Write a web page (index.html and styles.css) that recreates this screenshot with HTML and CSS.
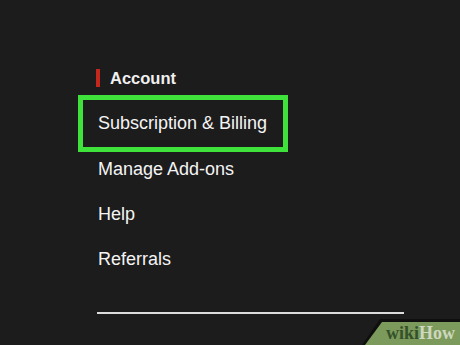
FILE: index.html
```html
<!DOCTYPE html>
<html>
<head>
<meta charset="utf-8">
<link rel="stylesheet" href="styles.css">
</head>
<body>
<div class="page">
  <div class="menu">
    <div class="heading"><span class="bar"></span><span class="heading-text">Account</span></div>
    <div class="selected">Subscription &amp; Billing</div>
    <ul class="items">
      <li>Manage Add-ons</li>
      <li>Help</li>
      <li>Referrals</li>
    </ul>
    <div class="rule"></div>
  </div>
  <div class="badge-shadow"></div>
  <div class="badge"><span class="wiki">wiki</span><span class="how">How</span></div>
</div>
</body>
</html>
```

FILE: styles.css
```css
html, body {
  margin: 0;
  padding: 0;
  background: #1c1c1c;
}
.page {
  position: relative;
  width: 460px;
  height: 345px;
  overflow: hidden;
  background: #1c1c1c;
  font-family: "Liberation Sans", Arial, sans-serif;
  color: #f4f4f4;
}
.menu {
  padding: 69px 0 0 78px;
  display: flex;
  flex-direction: column;
}
.heading {
  display: flex;
  align-items: center;
  gap: 10px;
  margin-left: 18px;
  height: 18px;
}
.bar {
  width: 4px;
  height: 18px;
  background: #c4281c;
}
.heading-text {
  font-weight: bold;
  font-size: 16.5px;
  line-height: 18px;
  color: #f0f0f0;
}
.selected {
  margin-top: 8px;
  width: 210px;
  height: 57px;
  box-sizing: border-box;
  border: 5px solid #3fe23b;
  padding: 0 15px;
  font-size: 18px;
  line-height: 47px;
  white-space: nowrap;
}
.items {
  list-style: none;
  margin: 0;
  padding: 5px 0 0 20px;
  display: flex;
  flex-direction: column;
  gap: 21px;
  font-size: 18px;
  line-height: 24px;
}
.rule {
  margin-top: 41px;
  margin-left: 19px;
  width: 307px;
  height: 2px;
  background: #dcdcdc;
}
.badge-shadow {
  position: absolute;
  left: 362px;
  top: 319px;
  width: 98px;
  height: 26px;
  background: #0f0f0f;
  clip-path: polygon(18px 0, 100% 0, 100% 100%, 0 100%);
}
.badge {
  position: absolute;
  left: 365px;
  top: 322px;
  width: 95px;
  height: 23px;
  background: #7c9a5b;
  clip-path: polygon(17px 0, 100% 0, 100% 100%, 0 100%);
  box-sizing: border-box;
  padding-left: 21px;
  font-family: "Liberation Serif", "Times New Roman", serif;
  font-weight: bold;
  font-size: 18px;
  line-height: 23px;
  white-space: nowrap;
}
.wiki {
  color: #34512a;
}
.how {
  color: #cdd8bf;
}
```
